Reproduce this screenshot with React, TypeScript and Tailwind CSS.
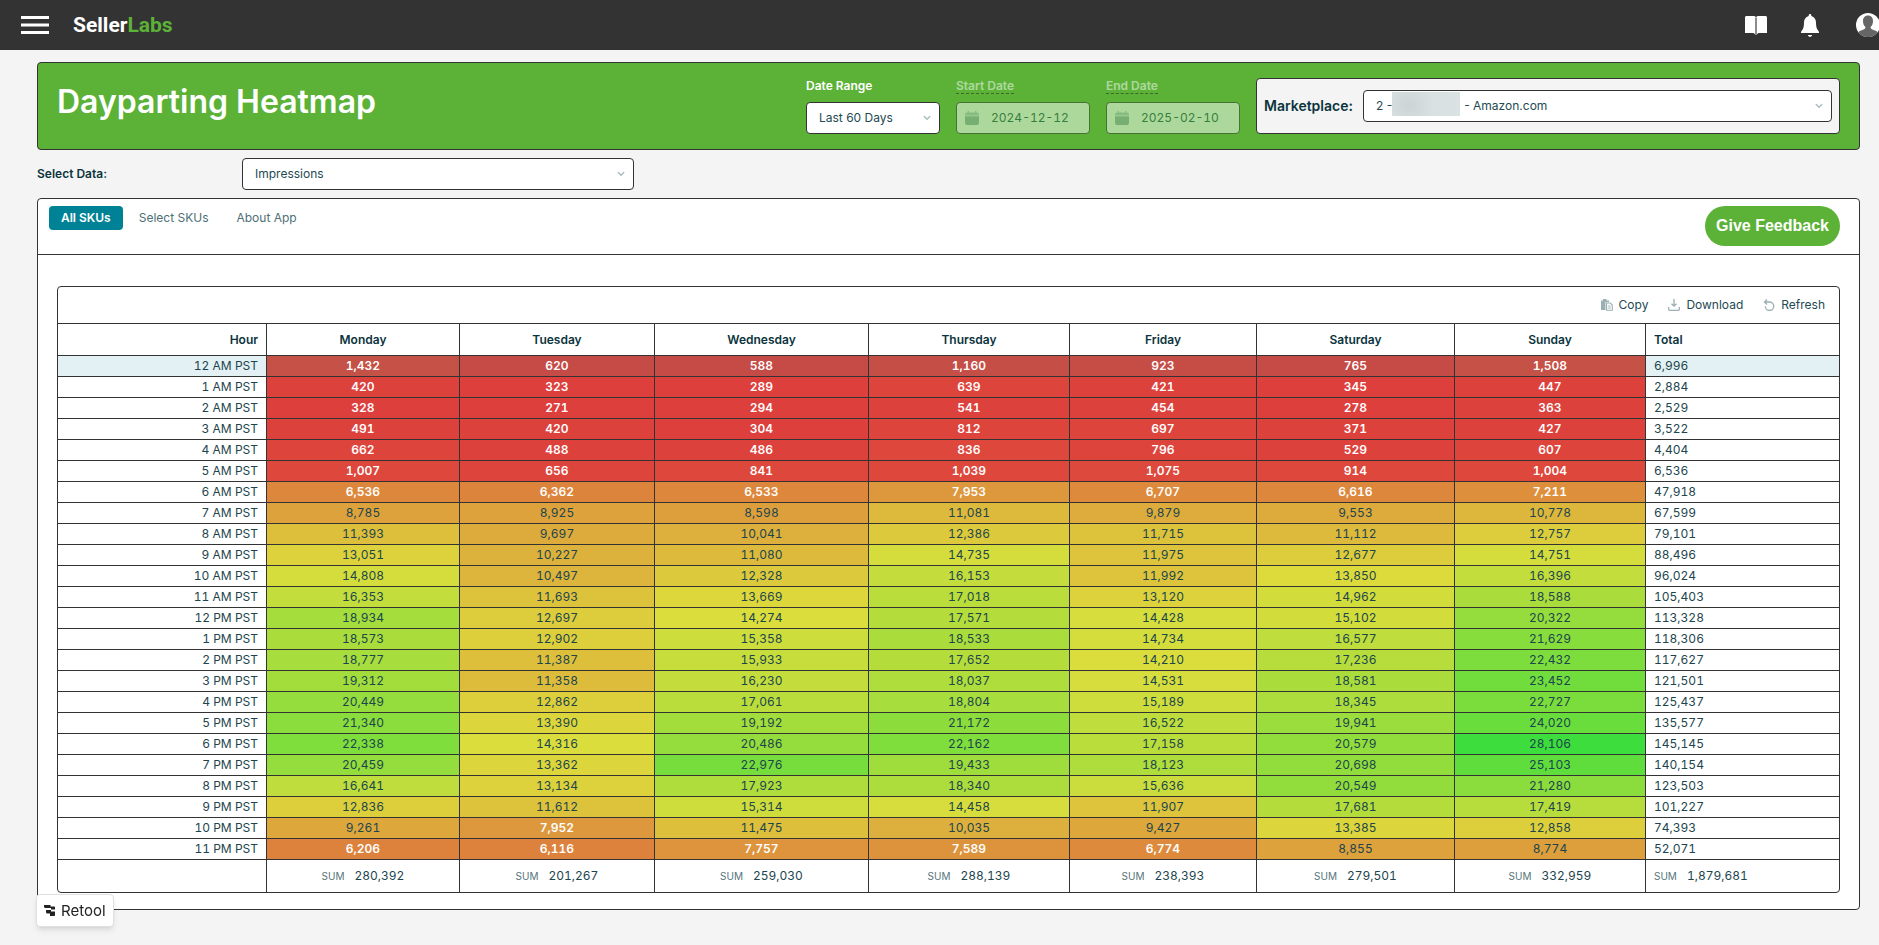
import type { ReactNode } from "react";
import clsx from "clsx";

const DAYS = ["Monday", "Tuesday", "Wednesday", "Thursday", "Friday", "Saturday", "Sunday"];
const SUMS = [280392, 201267, 259030, 288139, 238393, 279501, 332959];
const GRAND_TOTAL = 1879681;

// hour, Monday to Sunday, total
const ROWS: [string, number[], number][] = [
  ["12 AM PST", [1432, 620, 588, 1160, 923, 765, 1508], 6996],
  ["1 AM PST", [420, 323, 289, 639, 421, 345, 447], 2884],
  ["2 AM PST", [328, 271, 294, 541, 454, 278, 363], 2529],
  ["3 AM PST", [491, 420, 304, 812, 697, 371, 427], 3522],
  ["4 AM PST", [662, 488, 486, 836, 796, 529, 607], 4404],
  ["5 AM PST", [1007, 656, 841, 1039, 1075, 914, 1004], 6536],
  ["6 AM PST", [6536, 6362, 6533, 7953, 6707, 6616, 7211], 47918],
  ["7 AM PST", [8785, 8925, 8598, 11081, 9879, 9553, 10778], 67599],
  ["8 AM PST", [11393, 9697, 10041, 12386, 11715, 11112, 12757], 79101],
  ["9 AM PST", [13051, 10227, 11080, 14735, 11975, 12677, 14751], 88496],
  ["10 AM PST", [14808, 10497, 12328, 16153, 11992, 13850, 16396], 96024],
  ["11 AM PST", [16353, 11693, 13669, 17018, 13120, 14962, 18588], 105403],
  ["12 PM PST", [18934, 12697, 14274, 17571, 14428, 15102, 20322], 113328],
  ["1 PM PST", [18573, 12902, 15358, 18533, 14734, 16577, 21629], 118306],
  ["2 PM PST", [18777, 11387, 15933, 17652, 14210, 17236, 22432], 117627],
  ["3 PM PST", [19312, 11358, 16230, 18037, 14531, 18581, 23452], 121501],
  ["4 PM PST", [20449, 12862, 17061, 18804, 15189, 18345, 22727], 125437],
  ["5 PM PST", [21340, 13390, 19192, 21172, 16522, 19941, 24020], 135577],
  ["6 PM PST", [22338, 14316, 20486, 22162, 17158, 20579, 28106], 145145],
  ["7 PM PST", [20459, 13362, 22976, 19433, 18123, 20698, 25103], 140154],
  ["8 PM PST", [16641, 13134, 17923, 18340, 15636, 20549, 21280], 123503],
  ["9 PM PST", [12836, 11612, 15314, 14458, 11907, 17681, 17419], 101227],
  ["10 PM PST", [9261, 7952, 11475, 10035, 9427, 13385, 12858], 74393],
  ["11 PM PST", [6206, 6116, 7757, 7589, 6774, 8855, 8774], 52071],
];

const MAX = 28106;
const LOW = 8000;

const heat = (value: number) => `hsl(${Math.round((value / MAX) * 120)} 70% 55%)`;
const fmt = (value: number) => value.toLocaleString("en-US");

function Chevron() {
  return (
    <svg
      viewBox="0 0 8 6"
      className="pointer-events-none absolute top-1/2 right-[9px] h-[6px] w-2 -translate-y-1/2"
      fill="none"
      stroke="#a9bdc0"
      strokeWidth="1.4"
      strokeLinecap="round"
      strokeLinejoin="round"
    >
      <path d="M1.2 1.4 4 4.2 6.8 1.4" />
    </svg>
  );
}

function Select({ id, value, children }: { id: string; value: string; children?: ReactNode }) {
  return (
    <div className="relative w-full">
      <select
        id={id}
        defaultValue={value}
        className="block h-8 w-full appearance-none rounded border border-[#333] bg-white pr-6 pl-3 text-xs text-[#234a52]"
      >
        <option>{value}</option>
      </select>
      {children}
      <Chevron />
    </div>
  );
}

function DateField({ id, label, value }: { id: string; label: string; value: string }) {
  return (
    <div className="w-[134px] opacity-50">
      <label htmlFor={id} className="mb-2 block h-4 text-xs leading-4 font-semibold text-white">
        <span className="inline-block h-4 border-b border-dashed border-[#222]">{label}</span>
      </label>
      <div className="flex h-8 items-center gap-3 rounded border border-[#333] bg-white px-2">
        <svg viewBox="0 0 14 14" className="size-[14px] shrink-0" fill="#93aeb0">
          <path d="M2.6 0H4v1.500h6V0h1.400v1.500H12a2 2 0 0 1 2 2v1H0v-1a2 2 0 0 1 2-2h.6z" opacity=".7" />
          <path d="M0 5.200h14V12a2 2 0 0 1-2 2H2a2 2 0 0 1-2-2z" />
        </svg>
        <input
          id={id}
          type="text"
          disabled
          defaultValue={value}
          className="w-full min-w-0 bg-transparent text-xs text-[#0d4a44] tabular-nums"
        />
      </div>
    </div>
  );
}

function ToolButton({ icon, children }: { icon: ReactNode; children: ReactNode }) {
  return (
    <button type="button" className="flex items-center gap-[6px]">
      <svg viewBox="0 0 12 12" className="size-3" fill="none" stroke="#9bb0b3" strokeWidth="1.3">
        {icon}
      </svg>
      {children}
    </button>
  );
}

function TopBar() {
  return (
    <header className="flex h-[50px] items-center overflow-hidden bg-[#333] pl-[21px]">
      <button type="button" aria-label="Menu">
        <svg viewBox="0 0 28 18" className="h-[18px] w-7" fill="#fff">
          <path d="M0 0h28v3H0zM0 7.5h28v3H0zM0 15h28v3H0z" />
        </svg>
      </button>
      <a href="#" className="ml-6 font-['Roboto',sans-serif] text-[21px] font-bold text-white">
        Seller<span className="text-[#5bb237]">Labs</span>
      </a>
      <div className="-mr-px ml-auto flex items-center">
        <button type="button" aria-label="Guides">
          <svg viewBox="0 0 22 19" className="h-[19px] w-[22px]">
            <path d="M0 1.5C0 .6.6 0 1.5 0H8c1.4 0 2.5.4 3 1.2C11.5.4 12.6 0 14 0h6.500c.9 0 1.500.6 1.500 1.500V17h-8.500L11 19l-2.500-2H0z" fill="#fff" />
            <path d="M10 1.500h2V19h-2z" fill="#8c8c8c" />
          </svg>
        </button>
        <button type="button" aria-label="Notifications" className="ml-[34px]">
          <svg viewBox="0 0 18 23" className="h-[23px] w-[18px]" fill="#fff">
            <path d="M9 0c.8 0 1.3.6 1.3 1.4v.5C13.4 2.7 15 5.3 15 8.500c0 4.500.8 6.500 2.500 8.500.4.500.5 1 .5 2H0c0-1 .1-1.500.5-2C2.200 15 3 13 3 8.500c0-3.200 1.600-5.800 4.700-6.600v-.5C7.700.6 8.200 0 9 0z" />
            <path d="M7 21h4c0 1-.9 1.800-2 1.800S7 22 7 21z" />
          </svg>
        </button>
        <button type="button" aria-label="Account" className="ml-[37px]">
          <svg viewBox="0 0 24 24" className="size-6">
            <circle cx="12" cy="12" r="12" fill="#fff" />
            <path d="M12 2.500c3 0 5 2.200 5 5.500 0 2.800-1 4.900-2.500 6 .2 1.500.8 2.200 2.500 2.800 1.800.6 3.500 1.200 4.700 2.400A12 12 0 0 1 2.300 19.200C3.500 18 5.200 17.400 7 16.800c1.700-.6 2.300-1.300 2.500-2.800C8 12.900 7 10.800 7 8c0-3.300 2-5.500 5-5.500z" fill="#666" />
          </svg>
        </button>
      </div>
    </header>
  );
}

function Banner() {
  return (
    <section className="flex items-start rounded border border-[#333] bg-[#5bb237] px-[19px] py-[15px]">
      <h1 className="flex-1 pt-1 text-[32px] leading-10 font-semibold text-white">Dayparting Heatmap</h1>
      <div className="flex items-start gap-4">
        <div className="w-[134px]">
          <label htmlFor="range" className="mb-2 block h-4 text-xs leading-4 font-semibold text-white">
            Date Range
          </label>
          <Select id="range" value="Last 60 Days" />
        </div>
        <DateField id="start" label="Start Date" value="2024-12-12" />
        <DateField id="end" label="End Date" value="2025-02-10" />
        <div className="flex h-14 w-[584px] items-center gap-[10px] rounded border border-[#333] bg-[#f4f4f4] px-[7px]">
          <label htmlFor="market" className="text-sm font-semibold text-[#0b343d]">
            Marketplace:
          </label>
          <Select id="market" value={"2 -\u2003\u2003\u2003\u2003\u2003\u2003- Amazon.com"}>
            <span className="pointer-events-none absolute top-[2px] left-[29px] h-6 w-[68px] bg-[radial-gradient(circle_at_25%_55%,#cbd4d6,#d9e0e1_45%,#dbe2e3)]" />
          </Select>
        </div>
      </div>
    </section>
  );
}

function Heatmap() {
  const line = "border-[#333] border-b";
  const hover = "bg-[linear-gradient(#00809a1c,#00809a1c)]";
  return (
    <div className="overflow-hidden rounded border border-[#333]">
      <div className="flex h-[37px] items-center justify-end gap-5 border-b border-[#333] pr-[14px] text-xs text-[#234a52]">
        <ToolButton
          icon={
            <>
              <path d="M0 1.500h2V0h3.500v1.500H8V3H4.500v8H0z" fill="#9bb0b3" stroke="none" />
              <path d="M5.600 4h3.600l2.100 2v5.300H5.600zM7.200 7h2.500M7.200 9h2.500" strokeWidth="1.1" />
            </>
          }
        >
          Copy
        </ToolButton>
        <ToolButton icon={<path d="M6 0v7M3.500 4.700 6 7.200l2.500-2.500M.7 8v2.300c0 .6.400 1 1 1h8.600c.6 0 1-.4 1-1V8" />}>
          Download
        </ToolButton>
        <ToolButton icon={<path d="M4 .5 1.500 3 4 5.500M1.500 3H6.500a4.200 4.200 0 1 1-4.200 4.200" />}>Refresh</ToolButton>
      </div>
      <table className="w-full table-fixed border-separate border-spacing-0 text-xs leading-4 text-[#1c454d] tabular-nums">
        <colgroup>
          <col className="w-[209px]" />
          <col className="w-[193px]" />
          <col className="w-[195px]" />
          <col className="w-[214px]" />
          <col className="w-[201px]" />
          <col className="w-[187px]" />
          <col className="w-[198px]" />
          <col className="w-[191px]" />
          <col className="w-[193px]" />
        </colgroup>
        <thead>
          <tr className="h-8 text-[#0b343d]">
            <th className={clsx(line, "border-r pr-2 text-right font-semibold")}>Hour</th>
            {DAYS.map((day) => (
              <th key={day} className={clsx(line, "border-r text-center font-semibold")}>
                {day}
              </th>
            ))}
            <th className={clsx(line, "pl-2 text-left font-semibold")}>Total</th>
          </tr>
        </thead>
        <tbody>
          {ROWS.map(([hour, values, total], i) => (
            <tr key={hour} className="h-[21px]">
              <td className={clsx(line, "border-r pr-2 text-right", i === 0 && hover)}>{hour}</td>
              {values.map((value, d) => (
                <td
                  key={DAYS[d]}
                  className={clsx(
                    line,
                    "border-r text-center",
                    value < LOW && "font-semibold text-white",
                    i === 0 && hover
                  )}
                  style={{ backgroundColor: heat(value) }}
                >
                  {fmt(value)}
                </td>
              ))}
              <td className={clsx(line, "pl-2", i === 0 && hover)}>{fmt(total)}</td>
            </tr>
          ))}
        </tbody>
        <tfoot>
          <tr className="h-8">
            <td className="border-r border-[#333]" />
            {SUMS.map((sum, d) => (
              <td key={DAYS[d]} className="border-r border-[#333] text-center">
                <span className="mr-[10px] text-[10px] text-[#56757b]">SUM</span>
                {fmt(sum)}
              </td>
            ))}
            <td className="pl-2">
              <span className="mr-[10px] text-[10px] text-[#56757b]">SUM</span>
              {fmt(GRAND_TOTAL)}
            </td>
          </tr>
        </tfoot>
      </table>
    </div>
  );
}

export default function App() {
  return (
    <div className="min-h-screen bg-[#f4f4f4] font-['Inter',sans-serif] text-xs text-[#1c454d]">
      <TopBar />
      <main className="pt-3 pr-[19px] pb-[35px] pl-[37px]">
        <Banner />
        <div className="my-2 flex items-center">
          <label htmlFor="metric" className="w-[205px] font-semibold text-[#0b343d]">
            Select Data:
          </label>
          <div className="w-[392px]">
            <Select id="metric" value="Impressions" />
          </div>
        </div>
        <section className="rounded border border-[#333] bg-white">
          <div className="flex h-14 items-start justify-between border-b border-[#333] pt-[7px] pr-[19px] pl-[11px]">
            <nav className="flex gap-1 text-[#4d6f76]">
              <button type="button" className="h-6 rounded bg-[#008296] px-3 font-semibold text-white">
                All SKUs
              </button>
              <button type="button" className="h-6 px-3">
                Select SKUs
              </button>
              <button type="button" className="h-6 px-3">
                About App
              </button>
            </nav>
            <button
              type="button"
              className="h-10 rounded-full bg-[#5bb237] px-[11px] font-['Liberation_Sans',sans-serif] text-base font-bold text-white"
            >
              Give Feedback
            </button>
          </div>
          <div className="px-[19px] pt-[31px] pb-4">
            <Heatmap />
          </div>
        </section>
      </main>
      <a
        href="#"
        className="fixed bottom-[18px] left-9 flex h-[33px] items-center gap-[6px] rounded border border-[#e0e0e0] bg-white px-[7px] text-[15px] text-[#222] shadow-md"
      >
        <svg viewBox="0 0 11 11" className="size-[11px]" fill="#222">
          <path d="M0 0h6.500v1.500H10c.6 0 1 .4 1 1v2H7V3H1.500C.6 3 0 2.400 0 1.500z" />
          <path d="M2 5h5v1.500h4V10c0 .6-.4 1-1 1H6V8.500H3.500C2.600 8.500 2 7.900 2 7z" />
        </svg>
        Retool
      </a>
    </div>
  );
}
